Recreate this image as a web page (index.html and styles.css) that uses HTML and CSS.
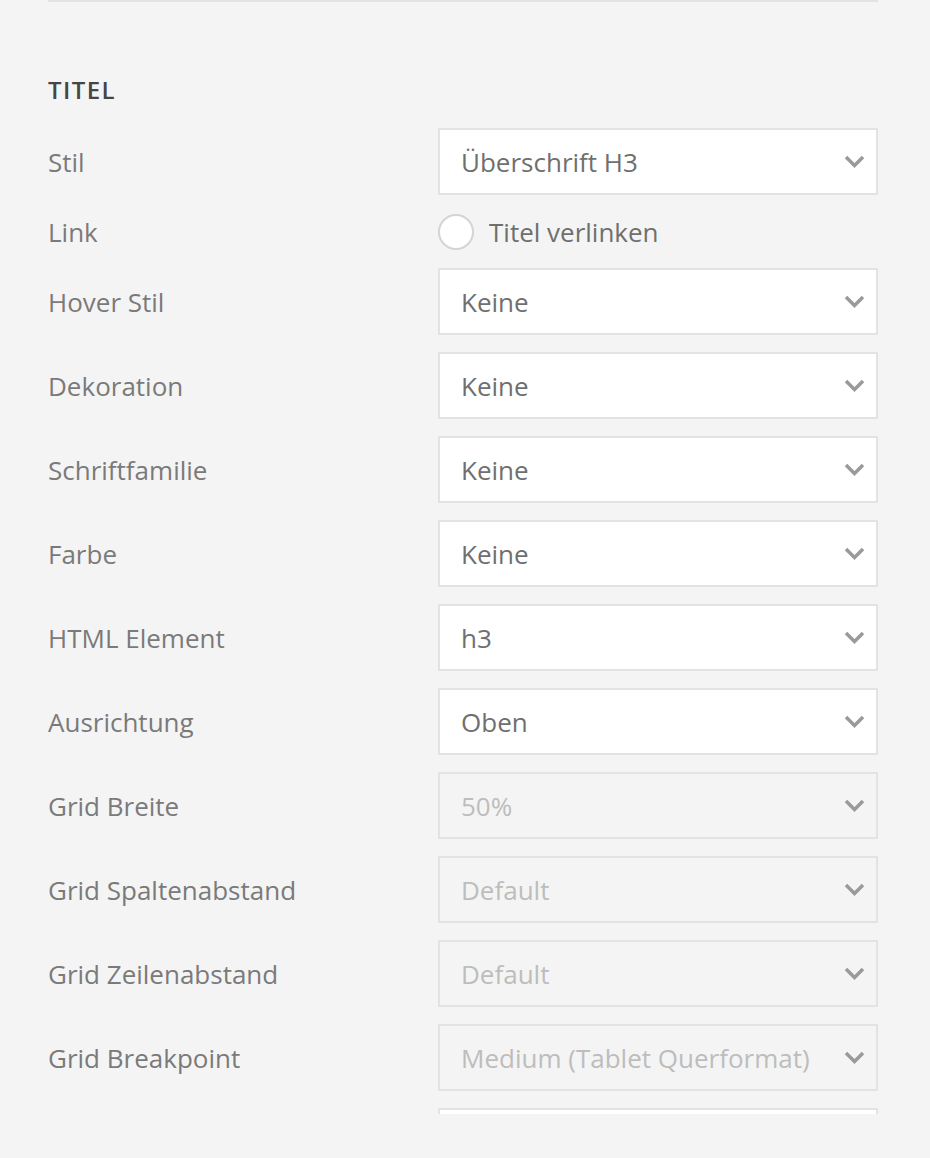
FILE: index.html
```html
<!DOCTYPE html>
<html lang="de">
<head>
  <meta charset="UTF-8"/>
  <title>Titel Einstellungen</title>
  <link rel="stylesheet" href="styles.css">
</head>
<body>

  <div class="panel">
    <div class="divider"></div>

    <h3 class="section-title">Titel</h3>

    <div class="fields">
      <label class="field-label">Stil</label>
      <div class="select"><span>Überschrift H3</span><svg class="chevron" viewBox="0 0 21 13"><path d="M2 2l8.5 8.5 8.5-8.5"/></svg></div>

      <label class="field-label">Link</label>
      <div class="check-row"><span class="radio"></span><span>Titel verlinken</span></div>

      <label class="field-label">Hover Stil</label>
      <div class="select"><span>Keine</span><svg class="chevron" viewBox="0 0 21 13"><path d="M2 2l8.5 8.5 8.5-8.5"/></svg></div>

      <label class="field-label">Dekoration</label>
      <div class="select"><span>Keine</span><svg class="chevron" viewBox="0 0 21 13"><path d="M2 2l8.5 8.5 8.5-8.5"/></svg></div>

      <label class="field-label">Schriftfamilie</label>
      <div class="select"><span>Keine</span><svg class="chevron" viewBox="0 0 21 13"><path d="M2 2l8.5 8.5 8.5-8.5"/></svg></div>

      <label class="field-label">Farbe</label>
      <div class="select"><span>Keine</span><svg class="chevron" viewBox="0 0 21 13"><path d="M2 2l8.5 8.5 8.5-8.5"/></svg></div>

      <label class="field-label">HTML Element</label>
      <div class="select"><span>h3</span><svg class="chevron" viewBox="0 0 21 13"><path d="M2 2l8.5 8.5 8.5-8.5"/></svg></div>

      <label class="field-label">Ausrichtung</label>
      <div class="select"><span>Oben</span><svg class="chevron" viewBox="0 0 21 13"><path d="M2 2l8.5 8.5 8.5-8.5"/></svg></div>

      <label class="field-label">Grid Breite</label>
      <div class="select disabled"><span>50%</span><svg class="chevron" viewBox="0 0 21 13"><path d="M2 2l8.5 8.5 8.5-8.5"/></svg></div>

      <label class="field-label">Grid Spaltenabstand</label>
      <div class="select disabled"><span>Default</span><svg class="chevron" viewBox="0 0 21 13"><path d="M2 2l8.5 8.5 8.5-8.5"/></svg></div>

      <label class="field-label">Grid Zeilenabstand</label>
      <div class="select disabled"><span>Default</span><svg class="chevron" viewBox="0 0 21 13"><path d="M2 2l8.5 8.5 8.5-8.5"/></svg></div>

      <label class="field-label">Grid Breakpoint</label>
      <div class="select disabled"><span>Medium (Tablet Querformat)</span><svg class="chevron" viewBox="0 0 21 13"><path d="M2 2l8.5 8.5 8.5-8.5"/></svg></div>

      <!-- next field, scrolled out of view -->
      <span class="field-label"></span>
      <div class="select"></div>
    </div>
  </div>

</body>
</html>
```

FILE: styles.css
```css
:root {
  --bg: #f4f4f4;
  --border: #e3e3e3;
  --label: #7a7a7a;
  --text: #6f6f6f;
  --muted: #bdbdbd;
}

* {
  margin: 0;
  padding: 0;
  box-sizing: border-box;
}

body {
  background: var(--bg);
  font-family: 'Open Sans', sans-serif;
  color: var(--text);
}

.panel {
  margin-left: 48px;
  width: 830px;
  height: 1114px;
  overflow: hidden;
}

.divider {
  height: 2px;
  background: var(--border);
}

.section-title {
  margin-top: 71px;
  font-size: 24px;
  font-weight: 600;
  letter-spacing: 1.4px;
  text-transform: uppercase;
  color: #454545;
  line-height: 34px;
}

.fields {
  margin-top: 21px;
  display: grid;
  grid-template-columns: 390px 440px;
  row-gap: 17px;
  align-items: center;
}

.field-label {
  font-size: 26px;
  color: var(--label);
}

.select {
  height: 67px;
  display: flex;
  align-items: center;
  justify-content: space-between;
  padding: 0 11px 0 21px;
  background: #fff;
  border: 2px solid var(--border);
  font-size: 26px;
  color: var(--text);
}

.select.disabled {
  background: var(--bg);
  color: var(--muted);
}

.chevron {
  width: 21px;
  height: 13px;
  fill: none;
  stroke: #9a9a9a;
  stroke-width: 3.5;
}

.check-row {
  height: 39px;
  display: flex;
  align-items: center;
  gap: 15px;
  font-size: 26px;
  color: var(--text);
}

.radio {
  width: 36px;
  height: 36px;
  border-radius: 50%;
  background: #fff;
  border: 2px solid #d4d4d4;
}
```
